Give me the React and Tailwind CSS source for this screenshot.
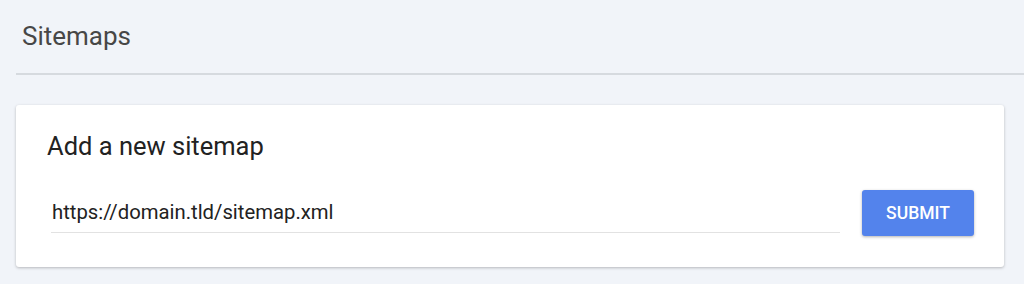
import React, { useState } from 'react';

const App = () => {
  const [url, setUrl] = useState('https://domain.tld/sitemap.xml');

  return (
    <div className="min-h-[284px] w-full bg-[#f1f4f9] pl-4" style={{ fontFamily: 'Roboto, "Liberation Sans", sans-serif' }}>
      <div className="h-[75px] border-b-2 border-[#d6dadf] pl-[6px] pt-[21px]">
        <h1 className="text-[26px] leading-[30px] text-[#474747]">Sitemaps</h1>
      </div>

      <div className="mr-5 mt-[30px] h-[162px] rounded-[3px] bg-white pl-[31px] pr-[30px] pt-[26px] shadow-[0_1px_3px_rgba(0,0,0,0.25)]">
        <h2 className="text-[25.5px] leading-[30px] text-[#222]">Add a new sitemap</h2>

        <div className="mt-[28px] flex items-center">
          <div className="ml-[4px] flex-1 border-b border-[#e2e2e2]">
            <input
              value={url}
              onChange={e => setUrl(e.target.value)}
              className="h-[40px] w-full bg-transparent pl-[1px] text-[20.3px] text-[#222] outline-none"
            />
          </div>
          <button className="ml-[22px] mt-[1px] h-[46px] w-[112px] rounded-[3px] bg-[#5383ec] text-[17.5px] font-medium text-white shadow-[0_1px_3px_rgba(0,0,0,0.3)]">
            SUBMIT
          </button>
        </div>
      </div>
    </div>
  );
};

export default App;
